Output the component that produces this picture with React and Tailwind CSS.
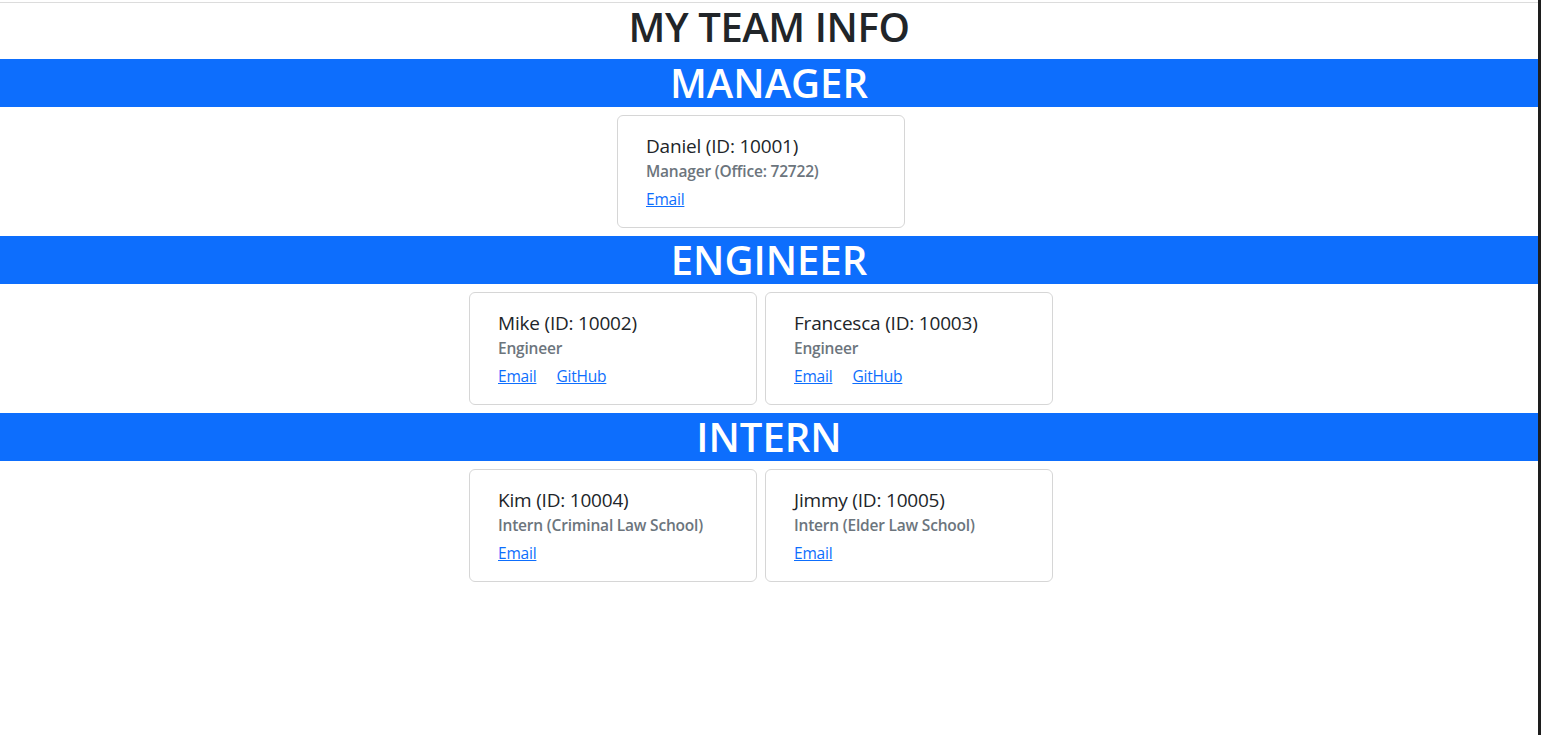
// App.jsx
// TEAM PAGE — page title, a blue band for each role, and a row of
// member cards under each band.

const team = {
  manager: [
    { name: 'Daniel', id: 10001, sub: 'Manager (Office: 72722)', github: false },
  ],
  engineer: [
    { name: 'Mike', id: 10002, sub: 'Engineer', github: true },
    { name: 'Francesca', id: 10003, sub: 'Engineer', github: true },
  ],
  intern: [
    { name: 'Kim', id: 10004, sub: 'Intern (Criminal Law School)', github: false },
    { name: 'Jimmy', id: 10005, sub: 'Intern (Elder Law School)', github: false },
  ],
};

function MemberCard({ m }) {
  return (
    <div className="w-[288px] border border-[#d6d6d6] rounded-md bg-white px-7 pt-[18px] pb-4">
      <h5 className="text-[19px] leading-[24px] font-medium tracking-[-0.2px] text-[#212529] mb-1">
        {m.name} (ID: {m.id})
      </h5>
      <h6 className="text-[15.5px] leading-[19px] font-semibold tracking-[-0.2px] text-[#6c757d] mb-[6px]">
        {m.sub}
      </h6>
      <div className="flex gap-5 text-[15.5px] leading-[24px] tracking-[-0.2px]">
        <a href="#" className="text-[#0d6efd] underline">Email</a>
        {m.github && <a href="#" className="text-[#0d6efd] underline">GitHub</a>}
      </div>
    </div>
  );
}

function Section({ title, members }) {
  return (
    <section>
      {/* ---- Blue role band ---- */}
      <h1 className="bg-[#0d6efd] text-white text-center text-[40px] leading-[48px] font-semibold">
        {title}
      </h1>
      {/* ---- Cards ---- */}
      <div className="flex justify-center gap-2 py-2 pr-4">
        {members.map((m) => (
          <MemberCard key={m.id} m={m} />
        ))}
      </div>
    </section>
  );
}

export default function App() {
  return (
    <div
      className="flex min-h-screen bg-white"
      style={{ fontFamily: '"Open Sans", "Noto Sans", sans-serif' }}
    >
      <main className="flex-1">
        <div className="mt-[2px] h-px bg-[#dcdcdc]" />
        <h1 className="text-center text-[40px] leading-[48px] font-semibold tracking-[-0.4px] text-[#212529] mb-2">
          MY TEAM INFO
        </h1>
        <Section title="MANAGER" members={team.manager} />
        <Section title="ENGINEER" members={team.engineer} />
        <Section title="INTERN" members={team.intern} />
      </main>
      {/* window edge */}
      <div className="w-[3px] bg-[#1e1e1e]" />
    </div>
  );
}
